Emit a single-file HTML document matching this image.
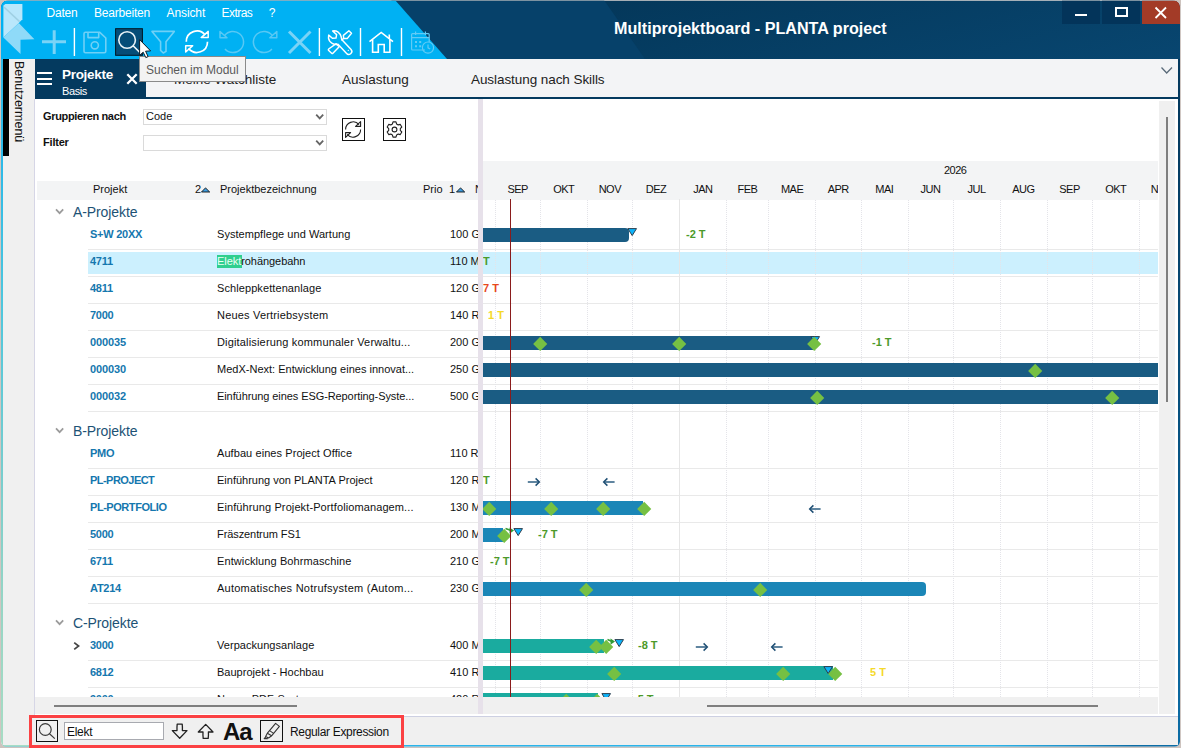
<!DOCTYPE html>
<html><head><meta charset="utf-8">
<style>
*{box-sizing:border-box;margin:0;padding:0}
html,body{width:1181px;height:748px;overflow:hidden;background:#cdc3be;font-family:"Liberation Sans",sans-serif;}
.a{position:absolute}
#win{position:absolute;left:0;top:0;width:1181px;height:748px;overflow:hidden;background:#f0f0f0;clip-path:inset(.85px .9px 1.4px .95px round 5.5px)}
.t{position:absolute;white-space:nowrap;line-height:1}
.menu{color:#fff;font-size:12px;top:7px;letter-spacing:-.3px}
.hdr{font-size:11px;color:#111;top:184px}
.code{font-size:11px;font-weight:bold;color:#1577ae;left:90px;letter-spacing:-.25px}
.nm{font-size:11px;color:#111;left:217px;letter-spacing:.1px}
.pr{font-size:11px;color:#111;left:450px}
.grp{font-size:14px;color:#1d5275;left:73px;letter-spacing:-.1px}
.sep{position:absolute;left:88px;width:1070px;height:1px;background:#e9e9e9}
.mon{font-size:11px;color:#111;top:184px;letter-spacing:-.5px;text-indent:.5px}
.bar{position:absolute;height:14px}
.A{background:#1a5c83}.B{background:#1b86b7}.C{background:#1aab9f}
.d{position:absolute;width:10.4px;height:10.4px;background:#76c043;transform:rotate(45deg)}
.gl{position:absolute;top:200px;height:498px;width:1px;background:repeating-linear-gradient(to bottom,#e4e4e9 0,#e4e4e9 1px,transparent 1px,transparent 2px)}
.gt{font-size:11px;font-weight:bold}
.g{color:#4c9a2a}.r{color:#e8471c}.y{color:#f5d92a}
.ar{font-size:14px;color:#3c6482}
</style></head><body>
<div id="win">
<!-- window frame -->
<div class="a" style="left:1px;top:0;width:1179px;height:746px;border-radius:7px;background:#f0f0f0;overflow:hidden" id="frame">
<div class="a" style="left:0;top:0;width:1179px;height:59px;background:linear-gradient(165deg,#04375a 0,#04385b 45%,#084670 100%)"></div>
<svg class="a" style="left:0;top:0" width="660" height="59"><polygon points="390,0 603,0 644,59 440,59" fill="#06416a"/><polygon points="0,0 394,0 446,59 0,59" fill="#00b1f3"/></svg>
</div>
<div class="t" style="left:614px;top:20px;color:#fff;font-size:16.15px;font-weight:bold">Multiprojektboard - PLANTA project</div>
<div class="t menu" style="left:46.5px;letter-spacing:-0.2px">Daten</div>
<div class="t menu" style="left:94px;letter-spacing:-0.2px">Bearbeiten</div>
<div class="t menu" style="left:166.5px;letter-spacing:-0.1px">Ansicht</div>
<div class="t menu" style="left:221.5px;letter-spacing:-0.55px">Extras</div>
<div class="t menu" style="left:268.7px;letter-spacing:0px">?</div>
<div class="a" style="left:1062px;top:0;width:38px;height:24px;background:#03345a"></div>
<div class="a" style="left:1102px;top:0;width:38px;height:24px;background:#03345a"></div>
<div class="a" style="left:1142px;top:0;width:38px;height:24px;background:#a33b27;border-top-right-radius:7px"></div>
<div class="a" style="left:1075px;top:14px;width:12px;height:2px;background:#fff"></div>
<div class="a" style="left:1115px;top:7px;width:13px;height:10px;border:2px solid #fff"></div>
<svg class="a" style="left:1154px;top:6px" width="14" height="14"><path d="M1.5 1.5L12 12M12 1.5L1.5 12" stroke="#fff" stroke-width="1.8" fill="none"/></svg>
<div class="a" style="left:35px;top:59px;width:1145px;height:38px;background:#f3f4f6"></div>
<div class="a" style="left:35px;top:97px;width:1145px;height:2px;background:#043a5f"></div>
<div class="a" style="left:35px;top:59px;width:111px;height:40px;background:#043a5f"></div>
<div class="a" style="left:37px;top:72px;width:15px;height:2px;background:#fff"></div>
<div class="a" style="left:37px;top:78px;width:15px;height:2px;background:#fff"></div>
<div class="a" style="left:37px;top:83px;width:15px;height:2px;background:#fff"></div>
<svg class="a" style="left:125px;top:72px" width="14" height="14"><path d="M2.3 2.3L11.7 11.7M11.7 2.3L2.3 11.7" stroke="#fff" stroke-width="2.3" fill="none"/></svg>
<div class="t" id="tP" style="left:62px;top:67.7px;color:#fff;font-size:13.5px;font-weight:bold;letter-spacing:-.3px">Projekte</div>
<div class="t" id="tB" style="left:62px;top:85.7px;color:#fff;font-size:11px;letter-spacing:-.4px">Basis</div>
<div class="t" id="tM" style="margin-top:.7px;left:174px;top:72px;color:#222;font-size:13.5px">Meine Watchliste</div>
<div class="t" id="tA" style="margin-top:.7px;left:342px;top:72px;color:#222;font-size:13.5px">Auslastung</div>
<div class="t" id="tS" style="margin-top:.7px;left:471px;top:72px;color:#222;font-size:13.5px;letter-spacing:-.07px">Auslastung nach Skills</div>
<svg class="a" style="left:1159px;top:65px" width="16" height="12"><path d="M2.5 2.5L7.7 8L13 2.5" stroke="#5a6b7a" stroke-width="1.3" fill="none"/></svg>
<div class="a" style="left:1px;top:59px;width:34px;height:687px;background:#f0f0f0"></div>
<div class="a" style="left:1px;top:59px;width:2px;height:688px;background:linear-gradient(to bottom,#2db9e8 0,#2db9e8 15%,#4dc6de 35%,#72ccd0 57%,#96d5c5 79%,#a8dcc4 100%)"></div>
<div class="a" style="left:3px;top:59px;width:6px;height:97px;background:#000"></div>
<div class="t" id="tU" style="left:25px;top:61px;font-size:12.5px;color:#111;transform-origin:0 0;transform:rotate(90deg)">Benutzermenü</div>
<div class="a" style="left:35px;top:99px;width:1143px;height:618px;background:#fff"></div>
<div class="a" style="left:34px;top:99px;width:1px;height:616px;background:#d6d6e6"></div>
<div class="a" style="left:1178px;top:59px;width:2px;height:687px;background:linear-gradient(to bottom,#043a5f 0,#043a5f 10%,#0b6ca5 100%)"></div>
<div class="a" style="left:37px;top:181px;width:445px;height:19px;background:#f3f4f5"></div>
<div class="a" style="left:482px;top:161px;width:676px;height:39px;background:#f3f4f5"></div>
<svg class="a" style="left:0;top:0" width="460" height="60" viewBox="0 0 460 60" fill="none">
<polygon points="3.4,5.4 5.4,4.1 22.4,4.1 22.4,19.2 18.8,23.1 3.4,37.6" fill="#b9e7fb"/>
<polygon points="18.8,23.1 34.4,39.2 20.5,39.8 20.5,53.9 3.4,37.6" fill="#8fdaf8"/>
<path d="M4.2 7.2L19.6 21.6" stroke="#9ccde0" stroke-width="1.5" opacity=".9"/>
<!-- plus -->
<path d="M42 41.7H66M54.2 30.2V54" stroke="#7ad3f6" stroke-width="3"/>
<!-- separators -->
<path d="M74.4 28V56M319.4 28V56M360.5 28V56M401.5 28V56" stroke="#fff" stroke-width="1.4"/>
<!-- save (disabled) -->
<g stroke="#6fd0f6" stroke-width="1.6" fill="none" stroke-linejoin="round">
<path d="M85.5 32.3H99.8L105.8 38V51.3Q105.8 52.8 104.3 52.8H85.5Q84 52.8 84 51.3V33.8Q84 32.3 85.5 32.3Z"/>
<path d="M88 32.5V37.6H98.7V32.5"/><circle cx="94.8" cy="45.3" r="3.6"/></g>
<!-- search button -->
<rect x="115.6" y="28.7" width="26.8" height="26.6" fill="#054d78" stroke="#011522" stroke-width="1"/>
<circle cx="127.1" cy="40" r="8.3" stroke="#e6f1f6" stroke-width="1.6"/>
<path d="M133.1 45.8L139.6 52.3" stroke="#eef6fa" stroke-width="1.6"/>
<!-- filter (disabled) -->
<path d="M152 31.4H174.3L166 41.8V51.4L163.3 53L160.6 50.4V41.8Z" stroke="#6fd0f6" stroke-width="1.6" stroke-linejoin="round"/>
<!-- refresh (enabled) -->
<g stroke="#fff" stroke-width="1.7" fill="none">
<path d="M186.3 41.7A10.6 10.6 0 0 1 205.2 35"/>
<path d="M207.5 41.7A10.6 10.6 0 0 1 188.6 48.4"/>
<path d="M208.2 31.4V37.6H201.2Z" stroke-linejoin="round" stroke-width="1.5"/>
<path d="M185.7 52V45.8H192.7Z" stroke-linejoin="round" stroke-width="1.5"/></g>
<!-- undo (disabled) -->
<g stroke="#58c8f4" stroke-width="1.5" fill="none">
<path d="M224.5 35.6A10.6 10.6 0 1 1 225 49"/>
<path d="M220 31.5V37.8H227Z" stroke-linejoin="round"/></g>
<!-- redo (disabled) -->
<g stroke="#58c8f4" stroke-width="1.5" fill="none">
<path d="M272.4 35.6A10.6 10.6 0 1 0 271.9 49"/>
<path d="M276.8 31.5V37.8H269.8Z" stroke-linejoin="round"/></g>
<!-- X (disabled) -->
<path d="M289 31.5L310.5 53M310.5 31.5L289 53" stroke="#7ad3f6" stroke-width="3"/>
<!-- tools (enabled) -->
<g stroke="#fff" stroke-width="1.45" fill="none" stroke-linejoin="round" stroke-linecap="round">
<path d="M332.6 31C336.5 30.2 340.5 33 341.2 37L341.7 39.4L351.1 49.5A2.9 2.9 0 0 1 346.4 53.3L338 44.3C334.5 45.2 329.2 43 328.5 38.2L328.7 35.1L332.4 38.3L336 38.1L336.6 34.6Z"/>
<path d="M343.4 35.4L348.9 30.7L351.5 33.3L347.4 38.4L343.6 38.4Z"/><path d="M343.2 38.8L342 40"/>
<path d="M336.2 43.7L339.2 46.7L332.9 53.2Q332.3 53.8 331.6 53.2L328.7 50.4Q328 49.7 328.7 49Z"/></g>
<circle cx="348.3" cy="50.4" r=".6" fill="#fff"/>
<!-- home -->
<g stroke="#fff" stroke-width="1.6" fill="none" stroke-linejoin="miter">
<path d="M369.5 41.7L381.2 32.4L393 41.7"/><path d="M372.6 39.5V52.2H378.3V44.5H384.2V52.2H389.9V39.5"/><path d="M389.3 34.5V38.5"/></g>
<!-- calendar (disabled) -->
<g stroke="#62cbf5" stroke-width="1.2" fill="none">
<path d="M425 50H412.6Q411.6 50 411.6 49V34.6Q411.6 33.6 412.6 33.6H428.2Q429.2 33.6 429.2 34.6V42"/>
<path d="M411.6 37.6H429.2M415.6 31.5V35M425.4 31.5V35"/>
<circle cx="428" cy="47.6" r="5.6"/><path d="M428 44.4V47.8L430.2 49"/>
<path d="M415 41h2v2h-2zM419.2 41h2v2h-2zM415 45.2h2v2h-2zM419.2 45.2h2v2h-2z" fill="#62cbf5" stroke="none"/></g>
</svg>
<div class="t" id="fG" style="left:43px;top:111px;font-size:11px;font-weight:bold;color:#111;letter-spacing:-.35px">Gruppieren nach</div>
<div class="t" id="fF" style="left:43px;top:137px;font-size:11px;font-weight:bold;color:#111;letter-spacing:-.2px">Filter</div>
<div class="a" style="left:143px;top:109px;width:184px;height:16px;border:1px solid #dadada;background:#fff"></div>
<div class="a" style="left:143px;top:135px;width:184px;height:16px;border:1px solid #dadada;background:#fff"></div>
<div class="t" style="left:146px;top:111px;font-size:11px;color:#111">Code</div>
<svg class="a" style="left:314px;top:112px" width="12" height="10"><path d="M2.2 2.6L5.7 6.4L9.2 2.6" stroke="#666" stroke-width="1.8" fill="none"/></svg>
<svg class="a" style="left:314px;top:138px" width="12" height="10"><path d="M2.2 2.6L5.7 6.4L9.2 2.6" stroke="#666" stroke-width="1.8" fill="none"/></svg>
<div class="a" style="left:342px;top:118px;width:23px;height:23px;border:1px solid #111;background:#fff"></div>
<div class="a" style="left:383px;top:118px;width:23px;height:23px;border:1px solid #111;background:#fff"></div>
<svg class="a" style="left:342px;top:118px" width="23" height="23" fill="none" stroke="#222" stroke-width="1.1">
<path d="M3.6 11.5A7.6 7.6 0 0 1 17 6.6"/><path d="M18.6 11.5A7.6 7.6 0 0 1 5.2 16.4"/>
<path d="M18.6 3.6V8.4H13.6Z" stroke-linejoin="round"/><path d="M3.6 19.4V14.6H8.6Z" stroke-linejoin="round"/></svg>
<svg class="a" style="left:383px;top:118px" width="23" height="23" viewBox="-11.5 -11.5 23 23" fill="none" stroke="#222" stroke-width="1.1" stroke-linejoin="round">
<circle r="2.4"/>
<path d="M-1.5,-7.6 L1.5,-7.6 L2.1,-5.5 L3.7,-4.6 L5.8,-5.1 L7.3,-2.5 L5.8,-0.9 L5.8,0.9 L7.3,2.5 L5.8,5.1 L3.7,4.6 L2.1,5.5 L1.5,7.6 L-1.5,7.6 L-2.1,5.5 L-3.7,4.6 L-5.8,5.1 L-7.3,2.5 L-5.8,0.9 L-5.8,-0.9 L-7.3,-2.5 L-5.8,-5.1 L-3.7,-4.6 L-2.1,-5.5 Z"/></svg>
<div class="a" style="left:88px;top:252px;width:1070px;height:22px;background:#ccf0fe"></div>
<div class="t code" style="top:229px;letter-spacing:-0.25px">S+W 20XX</div><div class="t nm" style="top:229px;letter-spacing:0.047px">Systempflege und Wartung</div><div class="t pr" style="top:229px">100 G</div>
<div class="sep" style="top:249px"></div>
<div class="t code" style="top:256px;letter-spacing:-0.25px">4711</div><div class="t nm" style="top:256px;letter-spacing:-0.057px"><span style="background:#2fcf8f;color:#eafff4;padding:0 .8px 1px 0;margin-right:-.8px">Elekt</span>rohängebahn</div><div class="t pr" style="top:256px">110 M</div>
<div class="sep" style="top:276px"></div>
<div class="t code" style="top:283px;letter-spacing:-0.25px">4811</div><div class="t nm" style="top:283px;letter-spacing:0.087px">Schleppkettenanlage</div><div class="t pr" style="top:283px">120 G</div>
<div class="sep" style="top:303px"></div>
<div class="t code" style="top:310px;letter-spacing:-0.25px">7000</div><div class="t nm" style="top:310px;letter-spacing:0.185px">Neues Vertriebsystem</div><div class="t pr" style="top:310px">140 R</div>
<div class="sep" style="top:330px"></div>
<div class="t code" style="top:337px;letter-spacing:-0.13px">000035</div><div class="t nm" style="top:337px;letter-spacing:0.166px">Digitalisierung kommunaler Verwaltu...</div><div class="t pr" style="top:337px">200 G</div>
<div class="sep" style="top:357px"></div>
<div class="t code" style="top:364px;letter-spacing:-0.13px">000030</div><div class="t nm" style="top:364px;letter-spacing:0.008px">MedX-Next: Entwicklung eines innovat...</div><div class="t pr" style="top:364px">250 G</div>
<div class="sep" style="top:384px"></div>
<div class="t code" style="top:391px;letter-spacing:-0.13px">000032</div><div class="t nm" style="top:391px;letter-spacing:-0.086px">Einführung eines ESG-Reporting-Syste...</div><div class="t pr" style="top:391px">500 G</div>
<div class="sep" style="top:411px"></div>
<div class="t code" style="top:448px;letter-spacing:-0.25px">PMO</div><div class="t nm" style="top:448px;letter-spacing:0.074px">Aufbau eines Project Office</div><div class="t pr" style="top:448px">110 R</div>
<div class="sep" style="top:468px"></div>
<div class="t code" style="top:475px;letter-spacing:-0.54px">PL-PROJECT</div><div class="t nm" style="top:475px;letter-spacing:-0.004px">Einführung von PLANTA Project</div><div class="t pr" style="top:475px">120 R</div>
<div class="sep" style="top:495px"></div>
<div class="t code" style="top:502px;letter-spacing:-0.45px">PL-PORTFOLIO</div><div class="t nm" style="top:502px;letter-spacing:0.105px">Einführung Projekt-Portfoliomanagem...</div><div class="t pr" style="top:502px">130 M</div>
<div class="sep" style="top:522px"></div>
<div class="t code" style="top:529px;letter-spacing:-0.25px">5000</div><div class="t nm" style="top:529px;letter-spacing:-0.085px">Fräszentrum FS1</div><div class="t pr" style="top:529px">200 M</div>
<div class="sep" style="top:549px"></div>
<div class="t code" style="top:556px;letter-spacing:-0.25px">6711</div><div class="t nm" style="top:556px;letter-spacing:0.097px">Entwicklung Bohrmaschine</div><div class="t pr" style="top:556px">210 G</div>
<div class="sep" style="top:576px"></div>
<div class="t code" style="top:583px;letter-spacing:-0.25px">AT214</div><div class="t nm" style="top:583px;letter-spacing:0.248px">Automatisches Notrufsystem (Autom...</div><div class="t pr" style="top:583px">230 G</div>
<div class="sep" style="top:603px"></div>
<div class="t code" style="top:640px;letter-spacing:-0.25px">3000</div><div class="t nm" style="top:640px;letter-spacing:0.039px">Verpackungsanlage</div><div class="t pr" style="top:640px">400 M</div>
<div class="sep" style="top:660px"></div>
<div class="t code" style="top:667px;letter-spacing:-0.25px">6812</div><div class="t nm" style="top:667px;letter-spacing:0.015px">Bauprojekt - Hochbau</div><div class="t pr" style="top:667px">410 R</div>
<div class="sep" style="top:687px"></div>
<div class="t code" style="top:694px;letter-spacing:-0.25px">9000</div><div class="t nm" style="top:694px;letter-spacing:-0.013px">Neues PDF-System</div><div class="t pr" style="top:694px">420 R</div>
<div class="t grp" style="top:205px">A-Projekte</div><svg class="a" style="left:54px;top:207px" width="12" height="10"><path d="M2 2.3L5.6 6.2L9.2 2.3" stroke="#9b9b9b" stroke-width="1.7" fill="none"/></svg>
<div class="t grp" style="top:424px">B-Projekte</div><svg class="a" style="left:54px;top:426px" width="12" height="10"><path d="M2 2.3L5.6 6.2L9.2 2.3" stroke="#9b9b9b" stroke-width="1.7" fill="none"/></svg>
<div class="t grp" style="top:616px">C-Projekte</div><svg class="a" style="left:54px;top:618px" width="12" height="10"><path d="M2 2.3L5.6 6.2L9.2 2.3" stroke="#9b9b9b" stroke-width="1.7" fill="none"/></svg>
<svg class="a" style="left:72px;top:641px" width="10" height="10"><path d="M2.2 1.6L6.6 5L2.2 8.4" stroke="#444" stroke-width="1.7" fill="none"/></svg>
<div class="t hdr" style="left:93px">Projekt</div><div class="t hdr" style="left:195px">2</div><div class="t hdr" style="left:220px">Projektbezeichnung</div><div class="t hdr" style="left:423px">Prio</div><div class="t hdr" style="left:449px">1</div><svg class="a" style="left:201px;top:187px" width="10" height="6"><polygon points="0.5,5 4.5,0.9 8.7,5" fill="#3d9de2" stroke="#111" stroke-width=".9" stroke-linejoin="round"/></svg><svg class="a" style="left:456px;top:187px" width="10" height="6"><polygon points="0.5,5 4.5,0.9 8.7,5" fill="#3d9de2" stroke="#111" stroke-width=".9" stroke-linejoin="round"/></svg><div class="t hdr" style="left:475px">N</div>
<div class="a" style="left:482px;top:99px;width:676px;height:598px;overflow:hidden" id="gantt"><div class="a" style="left:-482px;top:-99px;width:1181px;height:748px">
<div class="gl" style="left:494.7px"></div>
<div class="t mon" style="left:497.4px;width:40px;text-align:center">SEP</div>
<div class="gl" style="left:540.1px"></div>
<div class="t mon" style="left:543.5px;width:40px;text-align:center">OKT</div>
<div class="gl" style="left:586.9px"></div>
<div class="t mon" style="left:589.6px;width:40px;text-align:center">NOV</div>
<div class="gl" style="left:632.3px"></div>
<div class="t mon" style="left:635.7px;width:40px;text-align:center">DEZ</div>
<div class="a" style="left:679.2px;top:199px;width:1px;height:498px;background:#e6e6e6"></div>
<div class="t mon" style="left:682.6px;width:40px;text-align:center">JAN</div>
<div class="gl" style="left:726.1px"></div>
<div class="t mon" style="left:727.2px;width:40px;text-align:center">FEB</div>
<div class="gl" style="left:768.4px"></div>
<div class="t mon" style="left:771.8px;width:40px;text-align:center">MAE</div>
<div class="gl" style="left:815.3px"></div>
<div class="t mon" style="left:818.0px;width:40px;text-align:center">APR</div>
<div class="gl" style="left:860.7px"></div>
<div class="t mon" style="left:864.1px;width:40px;text-align:center">MAI</div>
<div class="gl" style="left:907.5px"></div>
<div class="t mon" style="left:910.2px;width:40px;text-align:center">JUN</div>
<div class="gl" style="left:952.9px"></div>
<div class="t mon" style="left:956.3px;width:40px;text-align:center">JUL</div>
<div class="gl" style="left:999.8px"></div>
<div class="t mon" style="left:1003.2px;width:40px;text-align:center">AUG</div>
<div class="gl" style="left:1046.7px"></div>
<div class="t mon" style="left:1049.3px;width:40px;text-align:center">SEP</div>
<div class="gl" style="left:1092.0px"></div>
<div class="t mon" style="left:1095.5px;width:40px;text-align:center">OKT</div>
<div class="gl" style="left:1138.9px"></div>
<div class="t mon" style="left:1141.6px;width:40px;text-align:center">NOV</div>
<div class="t mon" style="left:935px;top:165px;width:40px;text-align:center">2026</div>
<div class="bar A" style="left:482px;top:228px;width:147px;border-radius:0 4px 4px 0"></div>
<svg class="a" style="left:626.8px;top:228px" width="11" height="9"><polygon points="0.9,0.6 9.5,0.6 5.2,7.6" fill="#0db4fb" stroke="#2e3e4e" stroke-width="1"/></svg>
<div class="t gt g" style="left:686px;top:229px">-2 T</div>
<div class="t gt g" style="left:483px;top:256px">T</div>
<div class="t gt r" style="left:483px;top:283px">7 T</div>
<div class="t gt y" style="left:488px;top:310px">1 T</div>
<div class="bar A" style="left:482px;top:336px;width:332px;border-radius:0 0px 0px 0"></div>
<svg class="a" style="left:810.3px;top:336px" width="11" height="9"><polygon points="0.9,0.6 9.5,0.6 5.2,7.6" fill="#0db4fb" stroke="#2e3e4e" stroke-width="1"/></svg>
<div class="d" style="left:535.3px;top:338.7px"></div>
<div class="d" style="left:674.3px;top:338.7px"></div>
<div class="d" style="left:808.9px;top:338.7px"></div>
<div class="t gt g" style="left:872px;top:337px">-1 T</div>
<div class="bar A" style="left:482px;top:363px;width:676px;border-radius:0 0px 0px 0"></div>
<div class="d" style="left:1030.3px;top:365.7px"></div>
<div class="bar A" style="left:482px;top:390px;width:676px;border-radius:0 0px 0px 0"></div>
<div class="d" style="left:812.3px;top:392.7px"></div>
<div class="d" style="left:1107.3px;top:392.7px"></div>
<div class="t gt g" style="left:483px;top:475px">T</div>
<svg class="a" style="left:526px;top:475.8px" width="16" height="12"><path d="M1.8 6H13" stroke="#44708f" stroke-width="1.7" fill="none"/><path d="M9.6 2.4L13.3 6L9.6 9.6" stroke="#1f4f74" stroke-width="1.5" fill="none"/></svg>
<svg class="a" style="left:600px;top:475.8px" width="16" height="12"><path d="M14.6 6H4" stroke="#44708f" stroke-width="1.7" fill="none"/><path d="M7.4 2.4L3.7 6L7.4 9.6" stroke="#1f4f74" stroke-width="1.5" fill="none"/></svg>
<div class="bar B" style="left:482px;top:501px;width:160.5px;border-radius:0 0px 0px 0"></div>
<div class="d" style="left:483.7px;top:503.7px"></div>
<div class="d" style="left:545.7px;top:503.7px"></div>
<div class="d" style="left:597.7px;top:503.7px"></div>
<div class="d" style="left:638.7px;top:503.7px"></div>
<svg class="a" style="left:806px;top:502.8px" width="16" height="12"><path d="M14.6 6H4" stroke="#44708f" stroke-width="1.7" fill="none"/><path d="M7.4 2.4L3.7 6L7.4 9.6" stroke="#1f4f74" stroke-width="1.5" fill="none"/></svg>
<div class="bar B" style="left:482px;top:528px;width:21px;border-radius:0 0px 0px 0"></div>
<svg class="a" style="left:505px;top:527px" width="11" height="8"><path d="M0.5 1.4L6 3.4" stroke="#3a9e34" stroke-width="1.6" fill="none"/><polygon points="4.5,0.6 9,3.6 4.5,6.8" fill="#2e9b34"/></svg>
<svg class="a" style="left:513.3px;top:528px" width="11" height="9"><polygon points="0.9,0.6 9.5,0.6 5.2,7.6" fill="#0db4fb" stroke="#2e3e4e" stroke-width="1"/></svg>
<div class="d" style="left:498.6px;top:530.7px"></div>
<div class="t gt g" style="left:538px;top:529px">-7 T</div>
<div class="t gt g" style="left:490px;top:556px">-7 T</div>
<div class="bar B" style="left:482px;top:582px;width:444px;border-radius:0 4px 4px 0"></div>
<div class="d" style="left:581.3px;top:584.7px"></div>
<div class="d" style="left:755.3px;top:584.7px"></div>
<div class="bar C" style="left:482px;top:639px;width:122px;border-radius:0 0px 0px 0"></div>
<svg class="a" style="left:607px;top:638px" width="10" height="8"><path d="M0.5 1.4L5 3.4" stroke="#3a9e34" stroke-width="1.6" fill="none"/><polygon points="3.5,0.6 8,3.6 3.5,6.8" fill="#2e9b34"/></svg>
<svg class="a" style="left:614.2px;top:639px" width="11" height="9"><polygon points="0.9,0.6 9.5,0.6 5.2,7.6" fill="#0db4fb" stroke="#2e3e4e" stroke-width="1"/></svg>
<div class="d" style="left:590.7px;top:641.7px"></div>
<div class="d" style="left:600.9px;top:641.7px"></div>
<div class="t gt g" style="left:638px;top:640px">-8 T</div>
<svg class="a" style="left:694px;top:640.8px" width="16" height="12"><path d="M1.8 6H13" stroke="#44708f" stroke-width="1.7" fill="none"/><path d="M9.6 2.4L13.3 6L9.6 9.6" stroke="#1f4f74" stroke-width="1.5" fill="none"/></svg>
<svg class="a" style="left:767.5px;top:640.8px" width="16" height="12"><path d="M14.6 6H4" stroke="#44708f" stroke-width="1.7" fill="none"/><path d="M7.4 2.4L3.7 6L7.4 9.6" stroke="#1f4f74" stroke-width="1.5" fill="none"/></svg>
<div class="bar C" style="left:482px;top:666px;width:351px;border-radius:0 0px 0px 0"></div>
<svg class="a" style="left:822.5px;top:666px" width="11" height="9"><polygon points="0.9,0.6 9.5,0.6 5.2,7.6" fill="#0db4fb" stroke="#2e3e4e" stroke-width="1"/></svg>
<div class="d" style="left:608.8px;top:668.7px"></div>
<div class="d" style="left:777.7px;top:668.7px"></div>
<div class="d" style="left:829.9px;top:668.7px"></div>
<div class="t gt y" style="left:870px;top:667px">5 T</div>
<div class="bar C" style="left:482px;top:693px;width:116px;border-radius:0 0px 0px 0"></div>
<div class="d" style="left:560.8px;top:695.7px"></div>
<div class="d" style="left:591.8px;top:695.7px"></div>
<svg class="a" style="left:600.5px;top:693px" width="11" height="9"><polygon points="0.9,0.6 9.5,0.6 5.2,7.6" fill="#0db4fb" stroke="#2e3e4e" stroke-width="1"/></svg>
<div class="t gt g" style="left:634px;top:694px">-5 T</div>
<div class="a" style="left:510px;top:199px;width:1px;height:498px;background:#8a1c1c"></div>
</div></div>
<div class="a" style="left:35px;top:697px;width:1123px;height:17px;background:#f0f0f0"></div>
<div class="a" style="left:478px;top:99px;width:5px;height:615px;background:#e7e1ea"></div>
<div class="a" style="left:1159px;top:101px;width:16px;height:613px;background:#f0f0f0"></div>
<div class="a" style="left:1166px;top:117px;width:2px;height:285px;background:#7f7f7f"></div>
<div class="a" style="left:54px;top:705px;width:243px;height:2px;background:#7f7f7f"></div>
<div class="a" style="left:707px;top:705px;width:391px;height:2px;background:#7f7f7f"></div>
<div class="a" style="left:3px;top:717px;width:1175px;height:28px;background:#f0f0f0"></div>
<div class="a" style="left:35px;top:716px;width:1143px;height:1px;background:#cdd0e2"></div>
<div class="a" style="left:3px;top:744.6px;width:1177px;height:2px;background:linear-gradient(to right,#2ab4ea 0,#2ab4ea 84%,#1a8ac4 92%,#0b6ca5 96%)"></div>
<div class="a" style="left:3px;top:744.6px;width:26px;height:2px;background:#a6dcc4"></div>
<div class="a" style="left:29px;top:715px;width:375px;height:33px;background:#f0f0f0"></div>
<div class="a" style="left:36px;top:720px;width:22px;height:22px;border:1px solid #111"></div>
<svg class="a" style="left:36px;top:720px" width="22" height="22" fill="none" stroke="#3a3a3a" stroke-width="1.2"><circle cx="9.3" cy="9.5" r="5.9"/><path d="M13.5 13.8L18.8 18.6"/></svg>
<div class="a" style="left:64px;top:722px;width:100px;height:18px;border:1px solid #a8aab0;background:#fff"></div>
<div class="t" id="bE" style="left:67px;top:726px;font-size:12px;color:#111;letter-spacing:-.3px">Elekt</div>
<svg class="a" style="left:171px;top:723px" width="18" height="17" fill="none" stroke="#222" stroke-width="1.3" stroke-linejoin="round"><path d="M6.2 1.2H11.2Q11.6 4.6 11.4 7.6H16L8.7 15.2L1.3 7.6H6Q5.8 4.6 6.2 1.2Z"/></svg>
<svg class="a" style="left:197px;top:723px" width="18" height="17" fill="none" stroke="#222" stroke-width="1.3" stroke-linejoin="round"><path d="M6.2 15.4H11.2Q11.6 12 11.4 9H16L8.7 1.4L1.3 9H6Q5.8 12 6.2 15.4Z"/></svg>
<div class="t" id="bA" style="left:223px;top:719.5px;font-size:24px;font-weight:bold;color:#111;letter-spacing:-1.2px">Aa</div>
<div class="a" style="left:260px;top:720px;width:23px;height:22px;border:1px solid #111"></div>
<svg class="a" style="left:260px;top:720px" width="23" height="22" fill="none" stroke="#333" stroke-width="1.1" stroke-linejoin="round"><path d="M15.6 3.4L19.4 6.4L11.6 15.8L7.4 13.2Z"/><path d="M9.6 10.6L13.6 13.4"/><path d="M7.4 13.2L5.6 16.6L8.6 18L11.6 15.8"/><path d="M5.8 16.8L4.2 18.6H7.8"/></svg>
<div class="t" id="bR" style="left:290px;top:726px;font-size:12px;color:#111;letter-spacing:-.33px">Regular Expression</div>
<div class="a" style="left:139px;top:56px;width:107px;height:26px;background:#f3f3f3;border:1px solid #8a8a8a"></div>
<div class="t" id="tT" style="left:146px;top:64px;font-size:12px;color:#5a5a5a">Suchen im Modul</div>
<svg class="a" style="left:137px;top:37px" width="18" height="24"><polygon points="2.6,2.6 2.6,18.4 6.2,15.2 8.8,20.6 11.1,19.6 8.6,14.2 13.6,13.9" fill="#fff" stroke="#0d1c28" stroke-width="1" stroke-linejoin="round"/></svg>
</div>
<div class="a" style="left:28.8px;top:714.9px;width:375.4px;height:33.1px;border:3px solid #fb4143;border-bottom-width:3.3px"></div>
</body></html>
